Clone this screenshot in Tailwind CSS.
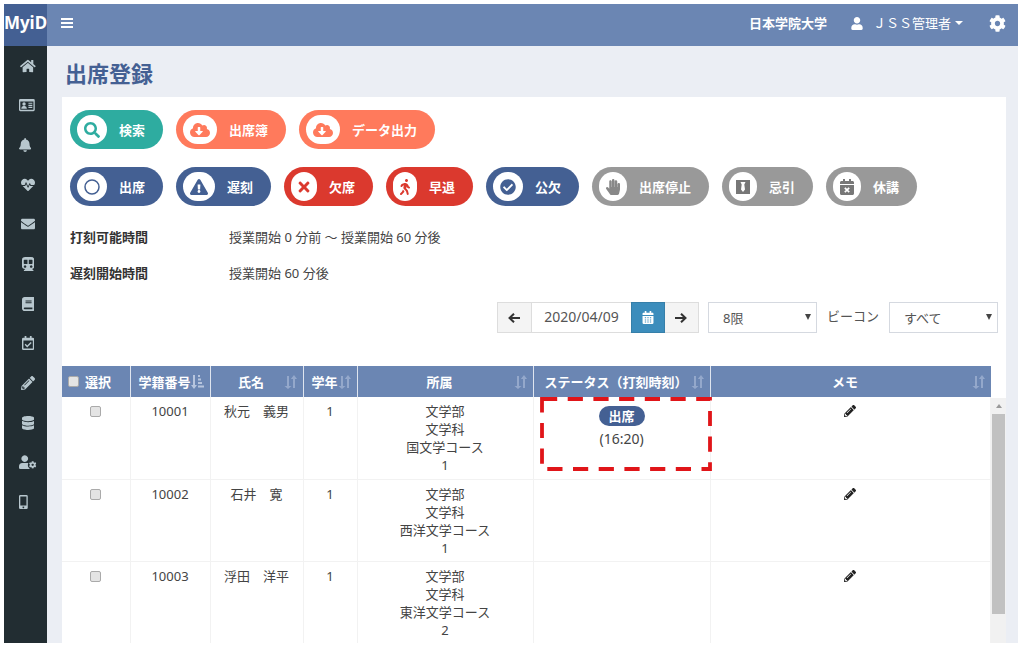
<!DOCTYPE html>
<html lang="ja">
<head>
<meta charset="utf-8">
<meta name="viewport" content="width=device-width, initial-scale=1">
<title>出席登録 | MyiD</title>
<script src="https://cdn.jsdelivr.net/npm/@tailwindcss/browser@4"></script>
</head>
<body class="h-screen overflow-hidden bg-white pt-1 pl-1 pr-1.5 pb-1.5 font-['Noto_Sans','Noto_Sans_CJK_JP',sans-serif] text-[13px] leading-[18px] text-[#444]">

<svg class="hidden" aria-hidden="true">
  <symbol id="pencil" viewBox="0 0 512 512"><path d="M497.9 142.1l-46.1 46.1c-4.7 4.7-12.3 4.7-17 0l-111-111c-4.7-4.7-4.7-12.3 0-17l46.1-46.1c18.7-18.7 49.1-18.7 67.9 0l60.1 60.1c18.8 18.7 18.8 49.1 0 67.9zM284.2 99.8L21.6 362.4.4 483.9c-2.9 16.4 11.4 30.6 27.8 27.8l121.5-21.3 262.6-262.6c4.7-4.7 4.7-12.3 0-17l-111-111c-4.8-4.7-12.4-4.7-17.1 0zM124.1 339.9c-5.5-5.5-5.5-14.3 0-19.8l154-154c5.5-5.5 14.3-5.5 19.8 0s5.5 14.3 0 19.8l-154 154c-5.5 5.5-14.3 5.5-19.8 0zM88 424h48v36.3l-64.5 11.3-31.1-31.1L51.7 376H88v48z"/></symbol>
  <symbol id="cloud" viewBox="0 0 640 512"><path d="M537.6 226.6c4.1-10.7 6.4-22.4 6.4-34.6 0-53-43-96-96-96-19.7 0-38.1 6-53.3 16.2C367 64.2 315.3 32 256 32c-88.4 0-160 71.6-160 160 0 2.7.1 5.4.2 8.1C40.2 219.8 0 273.2 0 336c0 79.5 64.5 144 144 144h368c70.7 0 128-57.3 128-128 0-61.9-44-113.6-102.4-125.4zm-132.9 88.7L299.3 420.7c-6.2 6.2-16.4 6.2-22.6 0L171.3 315.3c-10.1-10.1-2.9-27.3 11.3-27.3H248V176c0-8.8 7.2-16 16-16h48c8.8 0 16 7.2 16 16v112h65.4c14.2 0 21.4 17.2 11.3 27.3z"/></symbol>
  <symbol id="calendar" viewBox="0 0 448 512"><path d="M436 160H12c-6.600 0-12-5.400-12-12v-36c0-26.500 21.500-48 48-48h48V12c0-6.600 5.400-12 12-12h40c6.600 0 12 5.400 12 12v52h128V12c0-6.600 5.400-12 12-12h40c6.600 0 12 5.400 12 12v52h48c26.500 0 48 21.500 48 48v36c0 6.600-5.400 12-12 12zM12 192h424c6.600 0 12 5.400 12 12v260c0 26.500-21.500 48-48 48H48c-26.500 0-48-21.500-48-48V204c0-6.600 5.400-12 12-12z"/></symbol>
  <symbol id="gear" viewBox="0 0 512 512"><path d="M487.4 315.7l-42.6-24.6c4.3-23.2 4.3-47 0-70.2l42.6-24.6c4.9-2.8 7.1-8.6 5.5-14-11.1-35.6-30-67.8-54.7-94.6-3.8-4.1-10-5.1-14.8-2.3L380.8 110c-17.9-15.4-38.5-27.3-60.8-35.1V25.8c0-5.6-3.9-10.5-9.4-11.7-36.7-8.2-74.3-7.8-109.2 0-5.5 1.2-9.4 6.1-9.4 11.7V75c-22.2 7.9-42.8 19.8-60.8 35.1L88.7 85.5c-4.9-2.8-11-1.9-14.8 2.3-24.7 26.7-43.6 58.9-54.7 94.6-1.7 5.4.6 11.2 5.5 14L67.3 221c-4.3 23.2-4.3 47 0 70.2l-42.6 24.6c-4.9 2.8-7.1 8.600-5.500 14 11.100 35.600 30 67.800 54.700 94.600 3.800 4.100 10 5.100 14.800 2.300l42.600-24.600c17.900 15.400 38.500 27.300 60.800 35.100v49.200c0 5.600 3.900 10.500 9.400 11.700 36.700 8.200 74.300 7.800 109.200 0 5.500-1.200 9.400-6.100 9.400-11.700v-49.200c22.200-7.900 42.800-19.800 60.800-35.100l42.600 24.600c4.900 2.800 11 1.900 14.800-2.300 24.700-26.700 43.600-58.900 54.700-94.600 1.500-5.500-.7-11.300-5.600-14.100zM256 336c-44.100 0-80-35.900-80-80s35.900-80 80-80 80 35.900 80 80-35.900 80-80 80z"/></symbol>
  <symbol id="user" viewBox="0 0 448 512"><path d="M224 256c70.700 0 128-57.300 128-128S294.700 0 224 0 96 57.300 96 128s57.300 128 128 128zm89.600 32h-16.700c-22.200 10.200-46.900 16-72.900 16s-50.600-5.800-72.900-16h-16.700C60.200 288 0 348.200 0 422.400V464c0 26.500 21.500 48 48 48h352c26.500 0 48-21.500 48-48v-41.600c0-74.200-60.200-134.400-134.400-134.400z"/></symbol>
  <symbol id="sort" viewBox="0 0 13 14"><path d="M3 1v10H0.500L4 14l3.500-3H5V1zM9 13V4H6.800L10 0l3 4h-2v9z"/></symbol>
</svg>

<div class="flex h-full">
  <aside class="flex w-[43px] shrink-0 flex-col bg-[#222d32]">
    <a href="#" class="flex h-[42px] shrink-0 items-center justify-center bg-[#446093] pb-1 text-[17px] font-bold text-white">MyiD</a>
    <nav class="grid h-[476px] shrink-0 grid-rows-12 pl-[15px] text-[#b8c7ce] [&_a]:flex [&_a]:w-[18px] [&_a]:items-center [&_a>svg]:h-3.5 [&_a>svg]:shrink-0 [&_a>svg]:fill-current">
      <a href="#" aria-label="ホーム" class="justify-center"><svg viewBox="0 0 576 512"><path d="M280.37 148.26L96 300.11V464a16 16 0 0 0 16 16l112.06-.29a16 16 0 0 0 15.92-16V368a16 16 0 0 1 16-16h64a16 16 0 0 1 16 16v95.64a16 16 0 0 0 16 16.05L464 480a16 16 0 0 0 16-16V300L295.67 148.26a12.19 12.19 0 0 0-15.3 0zM571.6 251.47L488 182.56V44.05a12 12 0 0 0-12-12h-56a12 12 0 0 0-12 12v72.61L318.47 43a48 48 0 0 0-61 0L4.34 251.47a12 12 0 0 0-1.6 16.9l25.5 31A12 12 0 0 0 45.15 301l235.22-193.74a12.19 12.19 0 0 1 15.3 0L530.9 301a12 12 0 0 0 16.9-1.6l25.5-31a12 12 0 0 0-1.7-16.93z"/></svg></a>
      <a href="#" aria-label="学生証"><svg viewBox="0 0 576 512"><path fill-rule="evenodd" d="M48 32h480q48 0 48 48v352q0 48-48 48H48q-48 0-48-48V80q0-48 48-48zM48 128v304h480V128z"/><circle cx="184" cy="220" r="62"/><path d="M80 390q0-95 80-95h48q80 0 80 95zM344 170h144v44H344zM344 246h144v44H344zM344 322h144v44H344z"/></svg></a>
      <a href="#" aria-label="お知らせ"><svg viewBox="0 0 448 512"><path d="M224 512c35.320 0 63.970-28.650 63.970-64H160.030c0 35.350 28.650 64 63.970 64zm215.390-149.710c-19.320-20.760-55.470-51.990-55.470-154.290 0-77.700-54.480-139.900-127.940-155.160V32c0-17.670-14.320-32-31.980-32s-31.980 14.330-31.980 32v20.840C118.560 68.100 64.080 130.300 64.080 208c0 102.300-36.150 133.530-55.470 154.290-6 6.450-8.660 14.160-8.610 21.710.11 16.400 12.980 32 32.100 32h383.800c19.120 0 32-15.600 32.100-32 .05-7.550-2.610-15.270-8.610-21.710z"/></svg></a>
      <a href="#" aria-label="健康" class="justify-center"><svg viewBox="0 0 512 512"><path d="M320.2 243.8l-49.7 99.4c-6 12.1-23.4 11.7-28.9-.6l-56.9-126.3-30 71.7H60.6l182.5 186.5c7.1 7.3 18.6 7.3 25.700 0L451.400 288H342.300l-22.100-44.200zM473.700 73.900l-2.400-2.500c-51.500-52.600-135.800-52.600-187.400 0L256 100l-27.900-28.500c-51.500-52.700-135.900-52.700-187.400 0l-2.400 2.400C-10.400 123.700-12.500 203 31 256h102.400l35.900-86.200c5.400-12.900 23.600-13.100 29.300-.4l58.200 129.300 49-97.900c5.900-11.800 22.700-11.800 28.600 0l27.600 55.200H481c43.500-53 41.400-132.300-7.300-182.100z"/></svg></a>
      <a href="#" aria-label="メール" class="justify-center"><svg viewBox="0 0 512 512"><path d="M502.3 190.8c3.9-3.1 9.7-.2 9.7 4.7V400c0 26.5-21.5 48-48 48H48c-26.5 0-48-21.500-48-48V195.600c0-5 5.700-7.800 9.700-4.700 22.400 17.400 52.100 39.500 154.100 113.600 21.100 15.400 56.700 47.800 92.200 47.600 35.700.3 72-32.800 92.300-47.600 102-74.100 131.600-96.300 154-113.700zM256 320c23.200.4 56.600-29.200 73.400-41.400 132.700-96.300 142.800-104.700 173.400-128.700 5.800-4.500 9.200-11.500 9.200-18.900v-19c0-26.500-21.500-48-48-48H48c-26.500 0-48 21.500-48 48v19c0 7.400 3.400 14.300 9.200 18.900 30.600 23.900 40.700 32.400 173.400 128.700 16.800 12.200 50.200 41.800 73.400 41.400z"/></svg></a>
      <a href="#" aria-label="交通" class="justify-center"><svg viewBox="0 0 448 512"><path fill-rule="evenodd" d="M120 0h208q120 0 120 96v256q0 70-80 90l50 45q10 25-14 25H84q-24 0-14-25l50-45q-120-20-120-90V96Q0 0 120 0zM64 120v112q0 24 24 24h112V96H88q-24 0-24 24zM248 96v160h112q24 0 24-24V120q0-24-24-24zM112 304a46 46 0 1 0 .1 0zM336 304a46 46 0 1 0 .1 0z"/></svg></a>
      <a href="#" aria-label="授業" class="justify-center"><svg viewBox="0 0 448 512"><path d="M448 360V24c0-13.3-10.7-24-24-24H96C43 0 0 43 0 96v320c0 53 43 96 96 96h328c13.3 0 24-10.700 24-24v-16c0-7.500-3.500-14.300-8.900-18.700-4.200-15.400-4.200-59.300 0-74.700 5.400-4.300 8.900-11.100 8.900-18.600zM128 134c0-3.300 2.700-6 6-6h212c3.300 0 6 2.700 6 6v20c0 3.300-2.700 6-6 6H134c-3.300 0-6-2.700-6-6v-20zm0 64c0-3.300 2.700-6 6-6h212c3.300 0 6 2.700 6 6v20c0 3.300-2.700 6-6 6H134c-3.300 0-6-2.700-6-6v-20zm253.400 250H96c-17.700 0-32-14.300-32-32 0-17.600 14.400-32 32-32h285.400c-1.900 17.100-1.900 46.900 0 64z"/></svg></a>
      <a href="#" aria-label="出席" class="justify-center"><svg viewBox="0 0 448 512"><path fill-rule="evenodd" d="M96 0h64v64h128V0h64v64h48q48 0 48 48v352q0 48-48 48H48q-48 0-48-48V112q0-48 48-48h48zM52 160v300h344V160z"/><path fill="none" stroke="currentColor" stroke-width="52" d="M115 305l75 75 145-145"/></svg></a>
      <a href="#" aria-label="編集" class="justify-center"><svg viewBox="0 0 512 512"><use href="#pencil"/></svg></a>
      <a href="#" aria-label="データ" class="justify-center"><svg viewBox="0 0 448 512"><path d="M448 73.143v45.714C448 159.143 347.667 192 224 192S0 159.143 0 118.857V73.143C0 32.857 100.333 0 224 0s224 32.857 224 73.143zM448 176v102.857C448 319.143 347.667 352 224 352S0 319.143 0 278.857V176c48.125 33.143 136.208 48.572 224 48.572S399.874 209.143 448 176zm0 160v102.857C448 479.143 347.667 512 224 512S0 479.143 0 438.857V336c48.125 33.143 136.208 48.572 224 48.572S399.874 369.143 448 336z"/></svg></a>
      <a href="#" aria-label="ユーザー設定"><svg viewBox="0 0 640 512"><path d="M210 256a122 122 0 1 0-.1 0zM124 288h180q30 0 40 8-40 80 0 150l40 40v26H48q-48 0-48-48v-42q0-134 124-134z"/><use href="#gear" x="360" y="220" width="280" height="280"/></svg></a>
      <a href="#" aria-label="モバイル"><svg viewBox="0 0 320 512"><path fill-rule="evenodd" d="M48 0h224q48 0 48 48v416q0 48-48 48H48q-48 0-48-48V48Q0 0 48 0zM48 52v332h224V52zM160 416a32 32 0 1 0 .1 0z"/></svg></a>
    </nav>
  </aside>

  <div class="flex min-w-0 flex-1 flex-col bg-[#ebeef4]">
    <header class="flex h-[42px] shrink-0 items-center bg-[#6b86b3] pr-3 pb-1 pl-3.5 text-white">
      <button type="button" aria-label="メニュー"><svg class="h-3 w-3 fill-white" viewBox="0 0 12 12"><path d="M0 1h12v2H0zM0 5h12v2H0zM0 9h12v2H0z"/></svg></button>
      <span class="ml-auto text-[13px] font-bold">日本学院大学</span>
      <button type="button" class="ml-6 flex items-center">
        <svg class="h-[13px] w-3 fill-white"><use href="#user"/></svg>
        <span class="ml-2.5">ＪＳＳ管理者</span>
        <svg class="ml-1 h-1 w-2 fill-white" viewBox="0 0 8 4"><path d="M0 0h8L4 4z"/></svg>
      </button>
      <button type="button" aria-label="設定" class="ml-[26px]"><svg class="size-[17px] fill-white"><use href="#gear"/></svg></button>
    </header>

    <main class="flex min-h-0 flex-1 flex-col pr-3 pl-[15px]">
      <h1 class="flex h-[51px] shrink-0 items-center pt-0.5 pl-[3px] text-[22px] leading-7 font-bold text-[#446093]">出席登録</h1>
      <section class="flex min-h-0 flex-1 flex-col bg-white pt-[13px]">
        <div class="flex flex-col gap-[18px] px-2 font-bold [&_button]:flex [&_button]:h-[39px] [&_button]:items-center [&_button]:gap-3 [&_button]:rounded-full [&_button]:pr-[18px] [&_button]:pl-[7px] [&_button]:text-white [&_button>span:first-child]:flex [&_button>span:first-child]:h-[29px] [&_button>span:first-child]:items-center [&_button>span:first-child]:rounded-full [&_button>span:first-child]:bg-white [&_button>span:first-child]:px-[7px] [&_svg]:h-4 [&_svg]:fill-current">
          <div class="flex flex-wrap gap-[13px]">
            <button type="button" class="bg-[#2eaca0]"><span class="text-[#2eaca0]"><svg class="w-4" viewBox="0 0 512 512"><path d="M505 442.7L405.3 343c-4.5-4.5-10.6-7-17-7H372c27.6-35.3 44-79.7 44-128C416 93.1 322.9 0 208 0S0 93.1 0 208s93.1 208 208 208c48.3 0 92.7-16.4 128-44v16.3c0 6.4 2.5 12.5 7 17l99.7 99.7c9.4 9.4 24.6 9.4 33.9 0l28.3-28.3c9.4-9.4 9.4-24.6.1-34zM208 336c-70.7 0-128-57.2-128-128 0-70.7 57.2-128 128-128 70.7 0 128 57.2 128 128 0 70.7-57.2 128-128 128z"/></svg></span><span>検索</span></button>
            <button type="button" class="bg-[#ff7a5c]"><span class="text-[#ff7a5c]"><svg class="w-5"><use href="#cloud"/></svg></span><span>出席簿</span></button>
            <button type="button" class="bg-[#ff7a5c]"><span class="text-[#ff7a5c]"><svg class="w-5"><use href="#cloud"/></svg></span><span>データ出力</span></button>
          </div>
          <div class="flex flex-wrap gap-[13px]">
            <button type="button" class="bg-[#446093]"><span class="text-[#446093]"><svg class="w-4" viewBox="0 0 16 16"><circle cx="8" cy="8" r="7" fill="none" stroke="currentColor" stroke-width="1.500"/></svg></span><span>出席</span></button>
            <button type="button" class="bg-[#446093]"><span class="text-[#446093]"><svg class="w-[18px]" viewBox="0 0 576 512"><path d="M569.517 440.013C587.975 472.007 564.806 512 527.94 512H48.054c-36.937 0-59.999-40.055-41.577-71.987L246.423 23.985c18.467-32.009 64.72-31.951 83.154 0l239.94 416.028zM288 354c-25.405 0-46 20.595-46 46s20.595 46 46 46 46-20.595 46-46-20.595-46-46-46zm-43.673-165.346l7.418 136c.347 6.364 5.609 11.346 11.982 11.346h48.546c6.373 0 11.635-4.982 11.982-11.346l7.418-136c.375-6.874-5.098-12.654-11.982-12.654h-63.383c-6.884 0-12.356 5.78-11.981 12.654z"/></svg></span><span>遅刻</span></button>
            <button type="button" class="bg-[#db392e]"><span class="text-[#db392e]"><svg class="w-3" viewBox="0 0 352 512"><path d="M242.72 256l100.07-100.07c12.28-12.28 12.28-32.19 0-44.48l-22.24-22.24c-12.28-12.28-32.19-12.28-44.48 0L176 189.28 75.93 89.21c-12.28-12.28-32.19-12.28-44.48 0L9.21 111.45c-12.28 12.28-12.28 32.19 0 44.48L109.28 256 9.21 356.07c-12.28 12.28-12.28 32.19 0 44.48l22.24 22.24c12.28 12.28 32.2 12.28 44.48 0L176 322.72l100.07 100.07c12.28 12.28 32.2 12.28 44.48 0l22.24-22.24c12.28-12.28 12.28-32.19 0-44.48L242.72 256z"/></svg></span><span>欠席</span></button>
            <button type="button" class="bg-[#db392e]"><span class="text-[#db392e]"><svg class="w-2.5" viewBox="0 0 320 512"><path d="M208 96c26.5 0 48-21.5 48-48S234.5 0 208 0s-48 21.5-48 48 21.5 48 48 48zm94.5 149.1l-23.3-11.8-9.7-29.4c-14.7-44.6-55.7-75.8-102.2-75.9-36-.1-55.9 10.1-93.3 25.2-21.6 8.7-39.3 25.2-49.7 46.2L17.6 213c-7.8 15.8-1.5 35 14.2 42.9 15.6 7.9 34.6 1.5 42.5-14.3L81 228c3.5-7 9.3-12.5 16.5-15.4l26.8-10.8-15.2 60.7c-5.2 20.8.4 42.9 14.9 58.8l59.9 65.4c7.2 7.9 12.3 17.4 14.9 27.7l18.3 73.3c4.3 17.1 21.7 27.6 38.8 23.3 17.1-4.3 27.6-21.7 23.3-38.8l-22.2-89c-2.6-10.3-7.7-19.9-14.9-27.7l-45.5-49.7 17.2-68.7 5.5 16.5c5.3 16.1 16.7 29.4 31.7 37l23.3 11.8c15.6 7.9 34.6 1.5 42.5-14.3 7.7-15.7 1.4-35.1-14.3-43zM73.6 385.8c-3.2 8.1-8 15.4-14.2 21.5l-50 50.1c-12.5 12.5-12.5 32.8 0 45.3s32.7 12.5 45.2 0l59.4-59.4c6.1-6.1 10.9-13.4 14.2-21.5l13.5-33.8c-55.3-60.3-38.7-41.8-47.4-53.7l-20.7 51.5z"/></svg></span><span>早退</span></button>
            <button type="button" class="bg-[#446093]"><span class="text-[#446093]"><svg class="w-4" viewBox="0 0 512 512"><path d="M504 256c0 136.967-111.033 248-248 248S8 392.967 8 256 119.033 8 256 8s248 111.033 248 248zM227.314 387.314l184-184c6.248-6.248 6.248-16.379 0-22.627l-22.627-22.627c-6.248-6.249-16.379-6.249-22.628 0L216 308.118l-70.059-70.059c-6.248-6.248-16.379-6.248-22.628 0l-22.627 22.627c-6.248 6.248-6.248 16.379 0 22.627l104 104c6.249 6.249 16.379 6.249 22.628.001z"/></svg></span><span>公欠</span></button>
            <button type="button" class="bg-[#999]"><span class="text-[#888]"><svg class="w-3.5" viewBox="0 0 448 512"><path d="M408.781 128.007C386.356 127.578 368 146.36 368 168.79V256h-8V79.79c0-22.43-18.356-41.212-40.781-40.783C297.488 39.423 280 57.169 280 79v177h-8V40.79C272 18.36 253.644-.422 231.219.007 209.488.423 192 18.169 192 40v216h-8V80.79c0-22.43-18.356-41.212-40.781-40.783C121.488 40.423 104 58.169 104 80v235.992l-31.648-43.519c-12.993-17.866-38.009-21.817-55.877-8.823-17.865 12.994-21.815 38.01-8.822 55.877l125.601 172.705A48 48 0 0 0 172.073 512h197.59c22.274 0 41.622-15.324 46.724-37.006l26.508-112.66a192.011 192.011 0 0 0 5.104-43.975V168c.001-21.831-17.487-39.577-39.218-39.993z"/></svg></span><span>出席停止</span></button>
            <button type="button" class="bg-[#999]"><span class="text-[#777]"><svg class="w-3.5" viewBox="0 0 14 16"><path fill-rule="evenodd" d="M0 1h14v14H0zM4.500 3l1.200 2.400L5 10.500l2 2.500 2-2.500-.7-5.100L9.500 3z"/></svg></span><span>忌引</span></button>
            <button type="button" class="bg-[#999]"><span class="text-[#777]"><svg class="w-3.5" viewBox="0 0 448 512"><use href="#calendar"/><path stroke="#fff" stroke-width="52" d="M154 282l140 140M294 282L154 422"/></svg></span><span>休講</span></button>
          </div>
        </div>

        <dl class="mt-[22px] grid grid-cols-[159px_1fr] gap-y-[18px] px-2 text-[13px]">
          <dt class="font-bold text-[#333]">打刻可能時間</dt><dd>授業開始 0 分前 〜 授業開始 60 分後</dd>
          <dt class="font-bold text-[#333]">遅刻開始時間</dt><dd>授業開始 60 分後</dd>
        </dl>

        <form class="mt-5 flex h-[31px] shrink-0 items-stretch justify-end pr-2 text-[13px] text-[#555]">
          <button type="button" aria-label="前の日" class="flex w-[35px] items-center justify-center border border-[#ddd] bg-[#f4f4f4] text-[#333]"><svg class="h-2.5 w-3" viewBox="0 0 12 10" fill="none" stroke="currentColor" stroke-width="2"><path d="M6 0.700L1.500 5 6 9.300M1.500 5H12"/></svg></button>
          <input aria-label="日付" value="2020/04/09" class="w-[99px] border-y border-[#ddd] bg-white pb-0.5 text-center text-sm">
          <button type="button" aria-label="カレンダー" class="flex w-[34px] items-center justify-center border border-[#367fa9] bg-[#3c8dbc] text-white"><svg class="h-[13px] w-3 fill-current" viewBox="0 0 448 512"><use href="#calendar"/><path stroke="#3c8dbc" stroke-width="40" stroke-dasharray="52 48" d="M98 270h260M98 350h260M98 430h260"/></svg></button>
          <button type="button" aria-label="次の日" class="flex w-[34px] items-center justify-center border border-l-0 border-[#ddd] bg-[#f4f4f4] text-[#333]"><svg class="h-2.5 w-3" viewBox="0 0 12 10" fill="none" stroke="currentColor" stroke-width="2"><path d="M6 0.700L10.500 5 6 9.300M10.500 5H0"/></svg></button>
          <div class="relative ml-[9px] w-[109px]">
            <select aria-label="時限" class="h-full w-full appearance-none border border-[#d5d9e0] bg-white pl-3.5 text-[13px]"><option>8限</option></select>
            <svg class="pointer-events-none absolute top-3 right-1.5 h-1.5 w-1.5 fill-[#444]" viewBox="0 0 6 6"><path d="M0 0h6L3 6z"/></svg>
          </div>
          <label for="beacon" class="mx-2.5 flex items-center pb-1">ビーコン</label>
          <div class="relative w-[109px]">
            <select id="beacon" class="h-full w-full appearance-none border border-[#d5d9e0] bg-white pl-3.5 text-[13px]"><option>すべて</option></select>
            <svg class="pointer-events-none absolute top-3 right-1.5 h-1.5 w-1.5 fill-[#444]" viewBox="0 0 6 6"><path d="M0 0h6L3 6z"/></svg>
          </div>
        </form>

        <div class="mt-[33px] flex min-h-0 flex-1 overflow-hidden">
          <table class="h-fit min-w-0 flex-1 table-fixed border-collapse text-center [&_input]:size-[11px] [&_input]:appearance-none [&_input]:rounded-xs [&_input]:border [&_input]:border-[#aaa] [&_input]:bg-[#e4e4e4] [&_td]:h-[82px] [&_td]:border-r [&_td]:border-b [&_td]:border-[#f2f2f2] [&_td]:px-1 [&_td]:pt-[5px] [&_td]:pb-1 [&_td]:align-top [&_th]:h-[31px] [&_th]:border-r [&_th]:border-[#dfe5ef] [&_th]:p-0 [&_th:last-child]:border-r-0 [&_th>div]:flex [&_th>div]:items-center [&_th>div]:pr-1.5 [&_th>div]:pl-2 [&_th_span]:flex-1 [&_th_span]:whitespace-nowrap [&_th_svg]:h-3.5 [&_th_svg]:w-[13px] [&_th_svg]:shrink-0 [&_th_svg]:fill-[#94a8cb]">
            <colgroup><col class="w-[68px]"><col class="w-[80px]"><col class="w-[93px]"><col class="w-[53px]"><col class="w-[176px]"><col class="w-[177px]"><col></colgroup>
            <thead class="bg-[#6b86b3] text-white">
              <tr>
                <th scope="col"><label class="flex items-center gap-1.5 pl-1.5"><input type="checkbox">選択</label></th>
                <th scope="col"><div><span>学籍番号</span><svg viewBox="0 0 13 14"><path fill="#b7c5de" d="M2 0h2v10h2l-3 4-3-4h2zM7 0h2v2H7zM7 3.500h3v2H7zM7 7h4v2H7zM7 10.500h6v2H7z"/></svg></div></th>
                <th scope="col"><div><span>氏名</span><svg><use href="#sort"/></svg></div></th>
                <th scope="col"><div><span>学年</span><svg><use href="#sort"/></svg></div></th>
                <th scope="col"><div><span>所属</span><svg><use href="#sort"/></svg></div></th>
                <th scope="col"><div><span>ステータス（打刻時刻）</span><svg><use href="#sort"/></svg></div></th>
                <th scope="col"><div><span>メモ</span><svg><use href="#sort"/></svg></div></th>
              </tr>
            </thead>
            <tbody>
              <tr>
                <td><input type="checkbox" aria-label="10001を選択" class="mt-1"></td>
                <td>10001</td><td>秋元　義男</td><td>1</td>
                <td>文学部<br>文学科<br>国文学コース<br>1</td>
                <td class="relative">
                  <div class="mt-1 flex flex-col items-center gap-1"><span class="rounded-full bg-[#446093] px-2.5 py-px font-bold text-white">出席</span><span class="text-sm leading-[18px]">(16:20)</span></div>
                  <svg class="pointer-events-none absolute top-0 left-1.5 h-[76px] w-[174px]" viewBox="0 0 174 76" fill="none" stroke="#e01519" stroke-width="3.800" stroke-dasharray="15.200 10.500"><path d="M2 2h168v70H2z"/></svg>
                </td>
                <td><button type="button" aria-label="メモを編集"><svg class="mt-[3px] size-3 fill-[#222]"><use href="#pencil"/></svg></button></td>
              </tr>
              <tr>
                <td><input type="checkbox" aria-label="10002を選択" class="mt-1"></td>
                <td>10002</td><td>石井　寛</td><td>1</td>
                <td>文学部<br>文学科<br>西洋文学コース<br>1</td>
                <td></td>
                <td><button type="button" aria-label="メモを編集"><svg class="mt-[3px] size-3 fill-[#222]"><use href="#pencil"/></svg></button></td>
              </tr>
              <tr class="[&>td]:border-b-0">
                <td><input type="checkbox" aria-label="10003を選択" class="mt-1"></td>
                <td>10003</td><td>浮田　洋平</td><td>1</td>
                <td>文学部<br>文学科<br>東洋文学コース<br>2</td>
                <td></td>
                <td><button type="button" aria-label="メモを編集"><svg class="mt-[3px] size-3 fill-[#222]"><use href="#pencil"/></svg></button></td>
              </tr>
            </tbody>
          </table>
          <div class="mt-8 flex w-[15px] shrink-0 flex-col items-center bg-[#f1f1f1] pb-[29px]" aria-hidden="true">
            <svg class="my-1.5 h-1 w-1.5 shrink-0 fill-[#999]" viewBox="0 0 6 4"><path d="M0 4h6L3 0z"/></svg>
            <div class="w-[13px] flex-1 bg-[#c1c1c1]"></div>
          </div>
        </div>
      </section>
    </main>
  </div>
</div>
</body>
</html>
